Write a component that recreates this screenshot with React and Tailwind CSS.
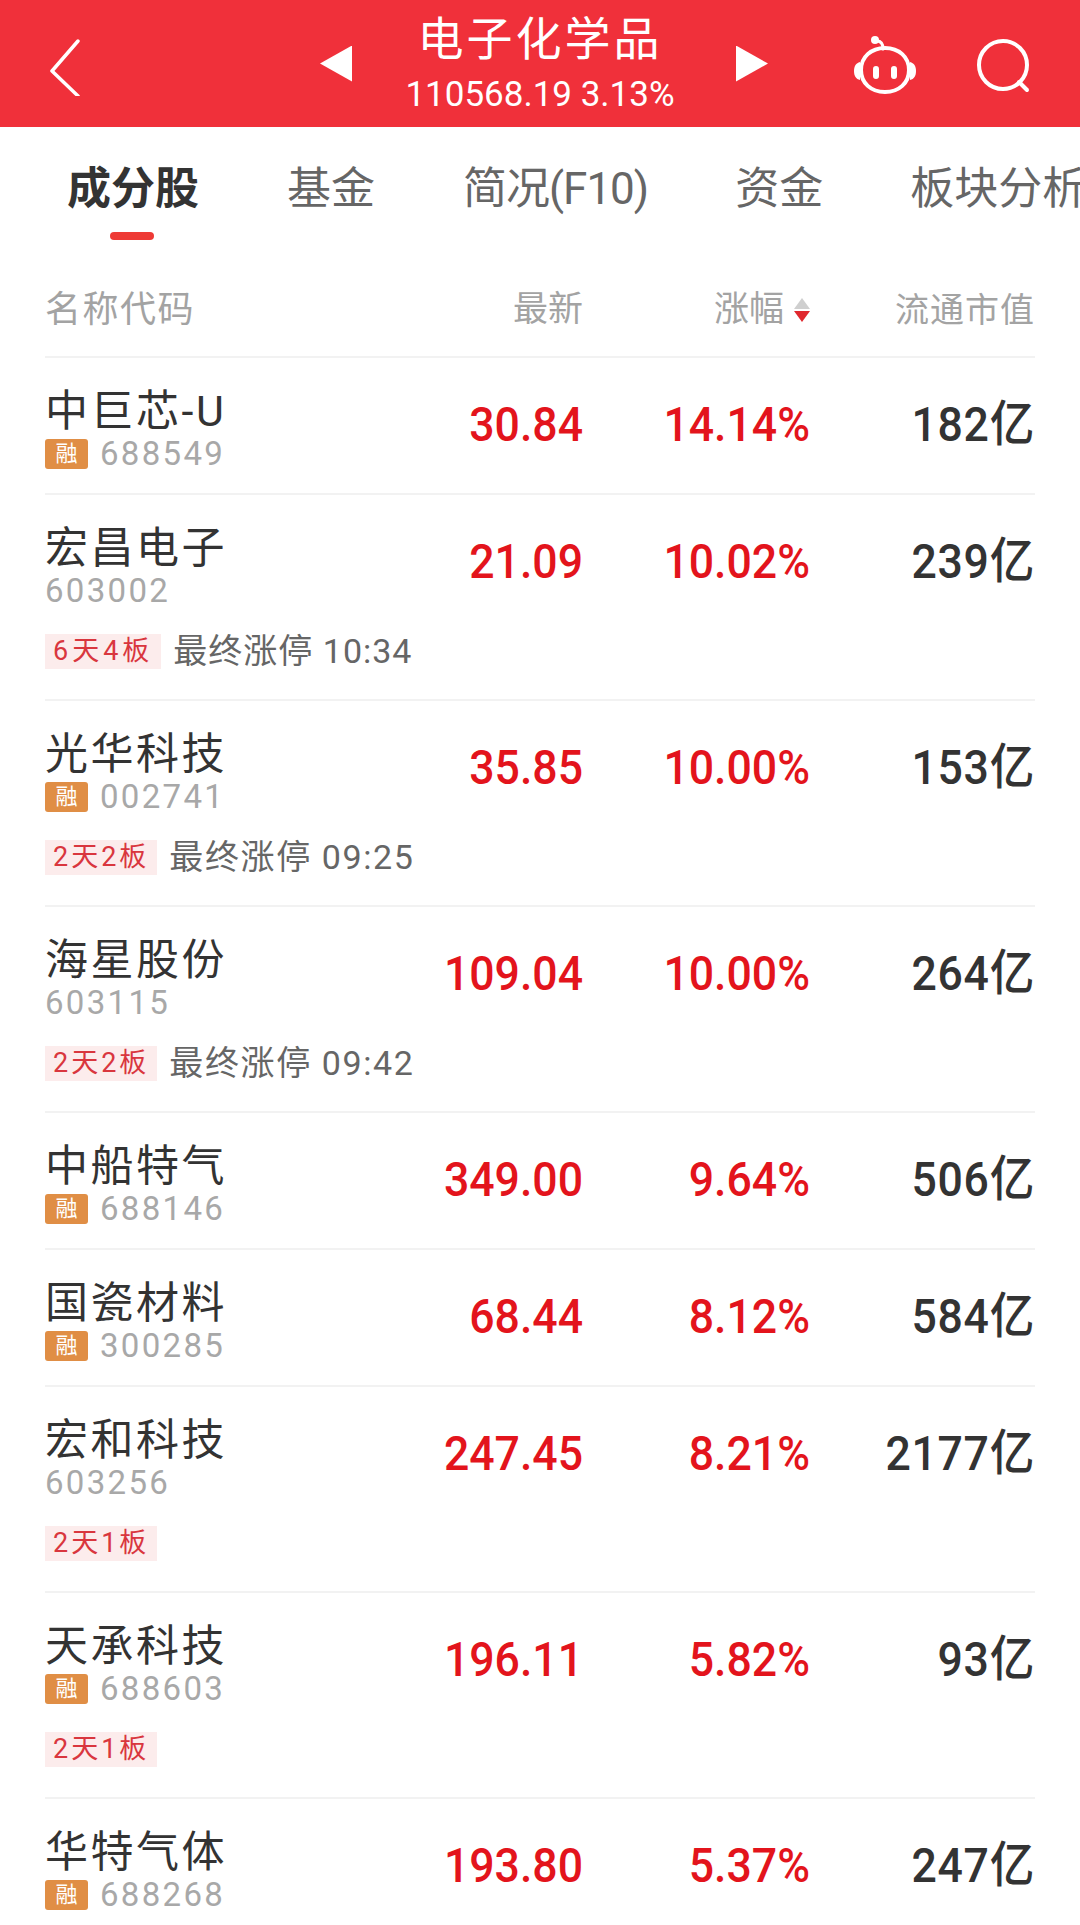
const cjk = "font-['Roboto','Noto_Sans_CJK_SC',sans-serif]";

const stocks = [
  { name: "中巨芯-U", code: "688549", rong: true, price: "30.84", pct: "14.14%", cap: "182" },
  { name: "宏昌电子", code: "603002", price: "21.09", pct: "10.02%", cap: "239", tag: "6天4板", wideTag: true, note: "最终涨停 10:34" },
  { name: "光华科技", code: "002741", rong: true, price: "35.85", pct: "10.00%", cap: "153", tag: "2天2板", note: "最终涨停 09:25" },
  { name: "海星股份", code: "603115", price: "109.04", pct: "10.00%", cap: "264", tag: "2天2板", note: "最终涨停 09:42" },
  { name: "中船特气", code: "688146", rong: true, price: "349.00", pct: "9.64%", cap: "506" },
  { name: "国瓷材料", code: "300285", rong: true, price: "68.44", pct: "8.12%", cap: "584" },
  { name: "宏和科技", code: "603256", price: "247.45", pct: "8.21%", cap: "2177", tag: "2天1板" },
  { name: "天承科技", code: "688603", rong: true, price: "196.11", pct: "5.82%", cap: "93", tag: "2天1板" },
  { name: "华特气体", code: "688268", rong: true, price: "193.80", pct: "5.37%", cap: "247" },
];

function RobotIcon() {
  return (
    <svg width="66" height="62" viewBox="0 0 66 62" fill="none" stroke="white" strokeWidth="4" strokeLinecap="round">
      <path d="M9 34c0-13 10-22 24-22s24 9 24 22-10 22-24 22S9 47 9 34z" />
      <path d="M25 5c4 0 6 3 6 8" strokeWidth="3" />
      <circle cx="23" cy="4" r="4" fill="white" stroke="none" />
      <path d="M2 35c0-5 2-8 6-9v18c-4-1-6-4-6-9zM64 35c0-5-2-8-6-9v18c4-1 6-4 6-9z" fill="white" stroke="none" />
      <path d="M24 33v7M42 33v7" strokeWidth="6" />
    </svg>
  );
}

function SearchIcon() {
  return (
    <svg width="56" height="56" viewBox="0 0 56 56" fill="none" stroke="white" strokeWidth="4" strokeLinecap="round">
      <circle cx="28" cy="27" r="24" />
      <path d="M44 44l8 8" />
    </svg>
  );
}

function StockRow({ stock }) {
  const valueClass = "font-medium text-[49px] leading-[60px] -mt-[1px] scale-x-[0.91] origin-right whitespace-nowrap";
  return (
    <div className={`border-t-2 border-[#f2f2f2] pt-[15px] ${stock.tag ? "h-[206px]" : "h-[137px]"}`}>
      <div className="flex items-center h-[104px]">
        <div className="w-[280px] shrink-0 self-start pt-[12px]">
          <div className="text-[43px] leading-[52px] tracking-[2.5px] text-[#333333] whitespace-nowrap">{stock.name}</div>
          <div className="flex items-center h-[36px] -mt-[1px]">
            {stock.rong && (
              <span className="w-[43px] h-[30px] mr-[12px] rounded-[3px] bg-[#e08e45] text-white text-[22px] leading-[30px] text-center">融</span>
            )}
            <span className="text-[33px] leading-[36px] tracking-[2.3px] text-[#a8a8a8]">{stock.code}</span>
          </div>
        </div>
        <div className={`w-[302px] -ml-[44px] text-right text-[#e3141c] ${valueClass}`}>{stock.price}</div>
        <div className={`w-[227px] text-right text-[#e3141c] ${valueClass}`}>{stock.pct}</div>
        <div className={`flex-1 text-right tracking-[0.8px] text-[#333333] ${valueClass}`}>{stock.cap}亿</div>
      </div>
      {stock.tag && (
        <div className="flex items-center mt-[18px] h-[38px]">
          <span className={`h-[35px] px-[8px] bg-[#fcecec] text-[#d9363e] text-[27px] leading-[35px] ${stock.wideTag ? "tracking-[4px]" : "tracking-[3px]"}`}>{stock.tag}</span>
          <span className={`ml-[12px] text-[34px] text-[#666666] ${stock.wideTag ? "tracking-[1px]" : "tracking-[1.6px]"}`}>{stock.note}</span>
        </div>
      )}
    </div>
  );
}

export default function App() {
  return (
    <div className={`w-[1080px] h-[1925px] overflow-hidden bg-white ${cjk}`}>
      <header className="relative h-[127px] pl-[8px] bg-[#f0303a] text-white flex items-center justify-center">
        <svg className="absolute left-[48px] top-[38px]" width="34" height="58" viewBox="0 0 34 58" fill="none" stroke="white" strokeWidth="3.5" strokeLinecap="round" strokeLinejoin="round">
          <path d="M30 3L4 33l26 25" />
        </svg>
        <div className="w-[32px] h-[36px] bg-white [clip-path:polygon(100%_0,0_50%,100%_100%)] mr-[52px]" />
        <div className="w-[272px] text-center whitespace-nowrap flex flex-col items-center">
          <div className="text-[46px] leading-[54px] tracking-[3px] h-[60px] -mt-[2px]">电子化学品</div>
          <div className="text-[35px] leading-[38px] mt-[4px]">110568.19 3.13%</div>
        </div>
        <div className="w-[32px] h-[36px] bg-white [clip-path:polygon(0_0,100%_50%,0_100%)] ml-[60px]" />
        <div className="absolute left-[852px] top-[36px]"><RobotIcon /></div>
        <div className="absolute left-[975px] top-[38px]"><SearchIcon /></div>
      </header>

      <nav className="flex h-[119px] overflow-hidden text-[44px] text-[#666666] whitespace-nowrap">
        <div className="relative ml-[67px] w-[132px] shrink-0 pt-[33px] leading-[58px] font-bold text-[#333333]">
          成分股
          <span className="absolute left-[43px] top-[105px] w-[44px] h-[8px] rounded-full bg-[#ee3a35]" />
        </div>
        <div className="ml-[88px] shrink-0 pt-[33px] leading-[58px]">基金</div>
        <div className="ml-[88px] shrink-0 pt-[33px] leading-[58px] tracking-[-1px]">简况(F10)</div>
        <div className="ml-[87px] shrink-0 pt-[33px] leading-[58px]">资金</div>
        <div className="ml-[87px] shrink-0 pt-[33px] leading-[58px]">板块分析</div>
      </nav>

      <main className="px-[45px]">
        <div className="flex items-center h-[110px] pt-[18px] text-[#a3a3a3] text-[35px]">
          <div className="w-[280px] tracking-[1.5px] text-[36px]">名称代码</div>
          <div className="w-[302px] -ml-[44px] text-right">最新</div>
          <div className="w-[227px] flex justify-end items-center">
            <span>涨幅</span>
            <span className="ml-[10px] flex flex-col gap-[2px]">
              <span className="w-[16px] h-[11px] bg-[#cfcfcf] [clip-path:polygon(50%_0,100%_100%,0_100%)]" />
              <span className="w-[16px] h-[11px] bg-[#e0282e] [clip-path:polygon(0_0,100%_0,50%_100%)]" />
            </span>
          </div>
          <div className="flex-1 text-right tracking-[1px] text-[34px]">流通市值</div>
        </div>
        {stocks.map((stock) => (
          <StockRow key={stock.code} stock={stock} />
        ))}
      </main>
    </div>
  );
}
